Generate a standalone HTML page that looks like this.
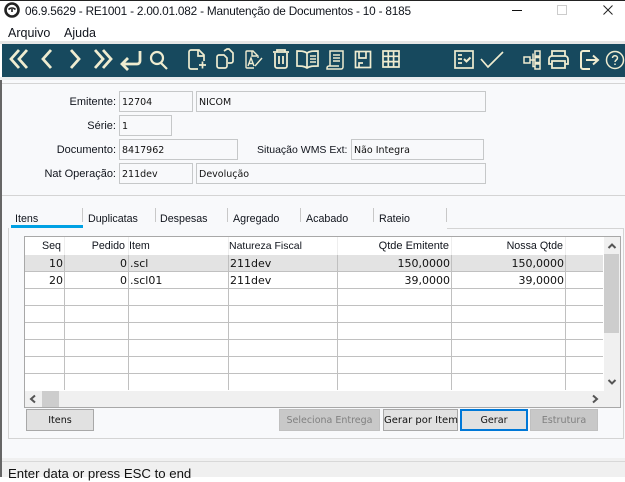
<!DOCTYPE html>
<html><head><meta charset="utf-8"><style>
html,body{margin:0;padding:0;background:#fff}
body{width:625px;height:477px;position:relative;overflow:hidden;font-family:"Liberation Sans",sans-serif;font-size:11px;color:#10141c}
.a{position:absolute;box-sizing:border-box}
.t{position:absolute;white-space:nowrap;line-height:14px}
.l{text-align:right;width:111px;left:5px}
.f{position:absolute;box-sizing:border-box;border:1px solid #c6c8c9;height:21px;font-family:"DejaVu Sans",sans-serif;font-size:9.5px;line-height:21px;padding-left:2px;white-space:nowrap;color:#111}
.b{position:absolute;box-sizing:border-box;top:409px;height:22px;border:1px solid #a8a8a8;background:#e1e1e1;text-align:center;line-height:21px;white-space:nowrap;font-family:"DejaVu Sans",sans-serif;font-size:9.6px;color:#111}
.d{background:#c8c8c8;border-color:#c0c0c0;color:#808080}
.h{position:absolute;background:#c0c0c0;height:1px;left:25px;width:578px}
.v{position:absolute;background:#c0c0c0;width:1px;top:237px;height:153px}
.c{position:absolute;white-space:nowrap;font-family:"DejaVu Sans",sans-serif;font-size:11px;line-height:14px;text-align:right;color:#111}
.th{position:absolute;white-space:nowrap;font-size:10.7px;line-height:14px;top:239px;color:#10141c}
.sep{position:absolute;background:#c8c8c8;width:1px;top:208px;height:14px}
.tab{position:absolute;top:212px;white-space:nowrap;font-size:10.7px;line-height:14px}
svg{position:absolute;left:0;top:0}
</style></head><body>
<div class="a" style="left:0;top:0;width:625px;height:1px;background:#222"></div>
<svg width="625" height="80" viewBox="0 0 625 80" style="z-index:2">
<circle cx="12" cy="10" r="6.500" fill="#fff" stroke="#222" stroke-width="2.600"/>
<path d="M8.500 9.500c2-2 5-2 7 0M12 9v3" fill="none" stroke="#222" stroke-width="1.600"/>
<path d="M512 10.500h10" stroke="#111" stroke-width="1"/>
<rect x="557.500" y="5.500" width="9" height="9" fill="none" stroke="#ccc"/>
<path d="M603.500 5.500l9 9M612.500 5.500l-9 9" stroke="#222" stroke-width="1" fill="none"/>
</svg>
<div class="t" style="left:25px;top:4px;font-size:11.8px;letter-spacing:-.2px;color:#10141c">06.9.5629 - RE1001 - 2.00.01.082 - Manutenção de Documentos - 10 - 8185</div>
<div class="t" style="left:8px;top:26px;font-size:12.5px">Arquivo</div>
<div class="t" style="left:64px;top:26px;font-size:12.5px">Ajuda</div>
<div class="a" style="left:0;top:41px;width:625px;height:3px;background:#e6e6e6"></div>
<div class="a" style="left:2px;top:44px;width:623px;height:33px;background:#17495e"></div>
<div class="a" style="left:0;top:77px;width:625px;height:3px;background:#e9ecee"></div>
<svg width="625" height="80" viewBox="0 0 625 80" style="z-index:2">
<g fill="none" stroke="#efecd0" stroke-width="2.200">
<path d="M19 50l-8 9 8 9M27 50l-8 9 8 9" stroke-width="2.800"/>
<path d="M51 50l-8 9 8 9" stroke-width="2.800"/>
<path d="M71 50l8 9-8 9" stroke-width="2.800"/>
<path d="M95 50l8 9-8 9M103 50l8 9-8 9" stroke-width="2.800"/>
<path d="M140 51v10a3 3 0 0 1-3 3h-13M128 58l-6 6 6 6" stroke-width="2.800"/>
<circle cx="157" cy="58" r="6"/><path d="M161 63l6 6"/>
<path d="M198 69h-7a2 2 0 0 1-2-2v-15a2 2 0 0 1 2-2h8l5 5v6M198 50v6h6M199 65h7M202.500 61.500v7" stroke-width="1.700"/>
<path d="M224 51l3-2h2l4 4v8a2 2 0 0 1-2 2h-3" stroke-width="1.700"/><path d="M219 55h5l3 3v8a2 2 0 0 1-2 2h-6a2 2 0 0 1-2-2v-9a2 2 0 0 1 2-2z" stroke-width="1.700"/>
<path d="M254 68h-7a1 1 0 0 1-1-1v-15a1 1 0 0 1 1-1h6l5 5v2M252 51v5h5" stroke-width="1.400"/><path d="M248 66l3-8 3 8M249 63.500h4M255 66l7-8" stroke-width="1.400"/>
<path d="M273 52h16M277 52v-2h8v2M275 53v13a2 2 0 0 0 2 2h8a2 2 0 0 0 2-2v-13" stroke-width="1.800"/><path d="M279 56v8M283 56v8" stroke-width="1.800"/>
<path d="M307 53c-3-2-6-2-10-2v15c4 0 7 0 10 2 3-2 6-2 11-2v-15c-5 0-8 0-11 2zM307 53v15" stroke-width="1.700"/><path d="M310 56h6M310 59h6M310 62h6" stroke-width="1.400"/>
<path d="M330 66v-15h13v16a2 2 0 0 1-2 2h-14v-1a2 2 0 0 1 2-2h10M333 55h7M333 58h7M333 61h7" stroke-width="1.500"/>
<rect x="355.500" y="51.500" width="15" height="16" stroke-width="1.700"/><path d="M359 51v7h7v-7M359 67v-4h4" stroke-width="1.700"/>
<path d="M383 51h16v16h-16zM383 56.300h16M383 61.600h16M388.300 51v16M393.600 51v16" stroke-width="1.700"/>
<rect x="455" y="51" width="18" height="17" stroke-width="1.700"/><path d="M458 55h4M458 59h4M458 63h4" stroke-width="1.700"/><path d="M464 59l2.500 2.500 4-4" stroke-width="2"/>
<path d="M481 59l7 8 15-15" stroke-width="1.700"/>
<path d="M524 57h6v6h-6zM535 51h5v5h-5zM535 57.500h5v5h-5zM535 64h5v5h-5zM530 60h5M533 53.500v13h2" stroke-width="1.500"/>
<path d="M552 56v-5h13v5M552 64h-3v-5a3 3 0 0 1 3-3h13a3 3 0 0 1 3 3v5h-3M552 61h13v7h-13z" stroke-width="1.800"/>
<path d="M590 51h-7a2 2 0 0 0-2 2v14a2 2 0 0 0 2 2h7M586 60h11M593 55.500l5 4.500-5 4.500" stroke-width="2"/>
<circle cx="615" cy="60" r="8.500" stroke-width="1.500"/><path d="M612.500 58c0-3 5-3 5 0 0 2-2.500 2-2.500 4" stroke-width="1.500"/><path d="M615 63.500v1.500" stroke-width="1.500"/>
</g></svg>

<div class="a" style="left:0;top:80px;width:2px;height:397px;background:#666"></div>
<div class="a" style="left:2px;top:80px;width:623px;height:378px;background:#f8f9fb"></div>
<div class="a" style="left:2px;top:83px;width:623px;height:1px;background:#d4d4d4"></div>
<div class="a" style="left:2px;top:195px;width:623px;height:1px;background:#d4d4d4"></div>

<div class="t l" style="top:95px">Emitente:</div>
<div class="t l" style="top:119px">Série:</div>
<div class="t l" style="top:143px">Documento:</div>
<div class="t l" style="top:167px">Nat Operação:</div>
<div class="t" style="left:257px;top:143px;font-size:10.5px">Situação WMS Ext:</div>
<div class="f" style="left:119px;top:91px;width:74px">12704</div>
<div class="f" style="left:196px;top:91px;width:290px">NICOM</div>
<div class="f" style="left:119px;top:115px;width:53px">1</div>
<div class="f" style="left:119px;top:139px;width:119px">8417962</div>
<div class="f" style="left:351px;top:139px;width:133px">Não Integra</div>
<div class="f" style="left:119px;top:163px;width:74px">211dev</div>
<div class="f" style="left:196px;top:163px;width:290px">Devolução</div>

<div class="tab" style="left:15px">Itens</div>
<div class="tab" style="left:88px">Duplicatas</div>
<div class="tab" style="left:160px">Despesas</div>
<div class="tab" style="left:233px">Agregado</div>
<div class="tab" style="left:306px">Acabado</div>
<div class="tab" style="left:379px">Rateio</div>
<div class="sep" style="left:82px"></div><div class="sep" style="left:155px"></div><div class="sep" style="left:227px"></div><div class="sep" style="left:300px"></div><div class="sep" style="left:373px"></div><div class="sep" style="left:446px"></div>
<div class="a" style="left:11px;top:225px;width:72px;height:3px;background:#00a1e4"></div>
<div class="a" style="left:8px;top:228px;width:1px;height:211px;background:#d4d4d4"></div>
<div class="a" style="left:447px;top:228px;width:177px;height:1px;background:#d4d4d4"></div>
<div class="a" style="left:623px;top:228px;width:1px;height:211px;background:#d4d4d4"></div>
<div class="a" style="left:8px;top:438px;width:616px;height:1px;background:#d4d4d4"></div>

<div class="a" style="left:24px;top:236px;width:597px;height:172px;background:#fff;border:1px solid #a8a8a8"></div>
<div class="a" style="left:25px;top:255px;width:578px;height:16px;background:#e3e3e3"></div>
<div class="h" style="top:271px"></div><div class="h" style="top:288px"></div><div class="h" style="top:305px"></div><div class="h" style="top:322px"></div><div class="h" style="top:339px"></div><div class="h" style="top:356px"></div><div class="h" style="top:373px"></div>
<div class="v" style="left:64px"></div><div class="v" style="left:128px"></div><div class="v" style="left:228px"></div><div class="v" style="left:337px"></div><div class="v" style="left:451px"></div><div class="v" style="left:565px"></div>
<div class="a" style="left:25px;top:237px;width:578px;height:18px;background:#fff"></div>
<div class="a" style="left:64px;top:237px;width:1px;height:18px;background:#eee"></div><div class="a" style="left:128px;top:237px;width:1px;height:18px;background:#eee"></div><div class="a" style="left:228px;top:237px;width:1px;height:18px;background:#eee"></div><div class="a" style="left:337px;top:237px;width:1px;height:18px;background:#eee"></div><div class="a" style="left:451px;top:237px;width:1px;height:18px;background:#eee"></div><div class="a" style="left:565px;top:237px;width:1px;height:18px;background:#eee"></div>

<div class="th" style="right:564px">Seq</div>
<div class="th" style="right:500px">Pedido</div>
<div class="th" style="left:129px">Item</div>
<div class="th" style="left:229px;font-size:10.5px">Natureza Fiscal</div>
<div class="th" style="right:176px;font-size:11px">Qtde Emitente</div>
<div class="th" style="right:62px">Nossa Qtde</div>

<div class="c" style="right:562px;top:257px">10</div><div class="c" style="right:498px;top:257px">0</div><div class="c" style="left:130px;top:257px">.scl</div><div class="c" style="left:230px;top:257px">211dev</div><div class="c" style="right:175px;top:257px">150,0000</div><div class="c" style="right:61px;top:257px">150,0000</div>
<div class="c" style="right:562px;top:274px">20</div><div class="c" style="right:498px;top:274px">0</div><div class="c" style="left:130px;top:274px">.scl01</div><div class="c" style="left:230px;top:274px">211dev</div><div class="c" style="right:175px;top:274px">39,0000</div><div class="c" style="right:61px;top:274px">39,0000</div>

<div class="a" style="left:604px;top:237px;width:16px;height:170px;background:#f0f0f0"></div>
<div class="a" style="left:25px;top:391px;width:595px;height:16px;background:#f0f0f0"></div>
<div class="a" style="left:604px;top:254px;width:15px;height:79px;background:#cdcdcd"></div>
<div class="a" style="left:42px;top:391px;width:17px;height:16px;background:#cdcdcd"></div>
<svg width="625" height="477" viewBox="0 0 625 477" style="z-index:3">
<g fill="none" stroke="#555" stroke-width="2">
<path d="M608.500 248l3.500-3.500 3.500 3.500"/>
<path d="M608.500 380l3.500 3.500 3.500-3.500"/>
<path d="M35 395.500l-4 3.500 4 3.500"/>
<path d="M593 395.500l4 3.500-4 3.500"/>
</g></svg>

<div class="b" style="left:26px;width:68px">Itens</div>
<div class="b d" style="left:279px;width:101px;font-size:9.5px">Seleciona Entrega</div>
<div class="b" style="left:383px;width:75px;font-size:10px">Gerar por Item</div>
<div class="b" style="left:460px;width:68px;border:2px solid #0078d7;line-height:19px">Gerar</div>
<div class="b d" style="left:530px;width:68px">Estrutura</div>

<div class="a" style="left:2px;top:458px;width:623px;height:19px;background:#f0f0f0"></div>
<div class="a" style="left:2px;top:461px;width:623px;height:1px;background:#d8d8d8"></div>
<div class="t" style="left:8px;top:466px;font-size:13.2px;line-height:16px;color:#111">Enter data or press ESC to end</div>
</body></html>
